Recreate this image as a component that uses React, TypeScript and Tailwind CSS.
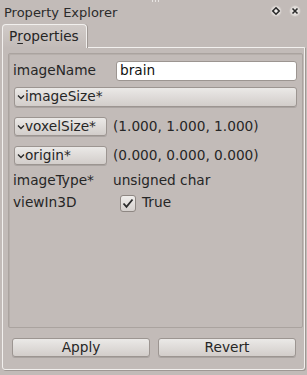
import React from 'react';

const font = { fontFamily: '"DejaVu Sans", Verdana, sans-serif' };

const Chevron = () => (
    <svg width="8" height="6" viewBox="0 0 8 6" className="shrink-0">
        <path d="M1 1.5 L4 4.5 L7 1.5" fill="none" stroke="#2a2a2a" strokeWidth="1.4" />
    </svg>
);

const ExpandButton: React.FC<{ label: string; className?: string }> = ({ label, className }) => (
    <button
        type="button"
        className={`flex items-center gap-[1px] pl-[2px] rounded-[3px] border border-[#9c9591] bg-gradient-to-b from-[#ebe9e7] to-[#d2cdca] shadow-[0_1px_0_rgba(0,0,0,0.12)] text-[13.7px] leading-none text-[#262626] ${className ?? ''}`}
    >
        <Chevron />
        <span className="-ml-[1px]">{label}</span>
    </button>
);

const TitleIcon: React.FC<{ kind: 'float' | 'close' }> = ({ kind }) => (
    <svg width="14" height="14" viewBox="0 0 14 14">
        <defs>
            <radialGradient id={`g-${kind}`} cx="50%" cy="50%" r="50%">
                <stop offset="0%" stopColor="#f4f2f0" />
                <stop offset="70%" stopColor="#dcd7d4" />
                <stop offset="100%" stopColor="#c2bbb8" stopOpacity="0" />
            </radialGradient>
        </defs>
        <circle cx="7" cy="7" r="6.5" fill={`url(#g-${kind})`} />
        {kind === 'float' ? (
            <path d="M7 3.8 L10.2 7 L7 10.2 L3.8 7 Z" fill="none" stroke="#2b2b2b" strokeWidth="1.6" />
        ) : (
            <path d="M4.5 4.5 L9.5 9.5 M9.5 4.5 L4.5 9.5" stroke="#2b2b2b" strokeWidth="1.6" />
        )}
    </svg>
);

export default function App() {
    return (
        <div className="w-[307px] h-[375px] bg-[#c2bbb8] text-[#262626] flex flex-col overflow-hidden relative" style={font}>
            <div className="absolute left-[152px] top-0 flex gap-[2px]">
                <span className="w-[1px] h-[2px] bg-[#e8e5e3]" />
                <span className="w-[1px] h-[2px] bg-[#e8e5e3]" />
                <span className="w-[1px] h-[2px] bg-[#e8e5e3]" />
            </div>
            {/* title bar */}
            <div className="h-[24px] flex items-center pl-[4px] pr-[5px] shrink-0">
                <span className="text-[13px] leading-none flex-1 text-[#2b2b2b]">Property Explorer</span>
                <div className="flex items-center gap-[5px] mt-[-2px]">
                    <TitleIcon kind="float" />
                    <TitleIcon kind="close" />
                </div>
            </div>

            {/* tab */}
            <div className="flex pl-[2px] shrink-0">
                <div className="h-[24px] w-[85px] rounded-t-[4px] border border-b-0 border-[#f2f0ee] bg-gradient-to-b from-[#d1cbc8] to-[#c2bbb8] shadow-[1px_0_0_#9f9894] flex items-center pl-[6px] text-[13.7px] leading-none -mb-[1px] relative z-10">
                    P<span className="underline underline-offset-2">r</span>operties
                </div>
            </div>

            {/* tab pane */}
            <div className="mx-[2px] h-[323px] border border-[#f2f0ee] rounded-b-[3px] shadow-[1px_1px_0_#9f9894] flex flex-col pt-[5px] pl-[5px] pr-[1px]">
                <div className="h-[275px] border border-[#aaa39f] rounded-[2px] shadow-[inset_1px_1px_0_#b6afab] flex flex-col pt-[7px] pl-[4px] pr-[5px]">
                    <div className="h-[20px] flex items-center">
                        <span className="w-[103px] text-[13.7px] leading-none">imageName</span>
                        <div className="flex-1 h-[20px] bg-white border border-[#9c9591] rounded-[3px] flex items-center pl-[3px] text-[13.7px] leading-none text-[#111]">
                            brain
                        </div>
                    </div>
                    <ExpandButton label="imageSize*" className="mt-[6px] h-[20px] w-[283px] ml-[1px]" />
                    <div className="mt-[10px] h-[19px] flex items-center">
                        <ExpandButton label="voxelSize*" className="h-[19px] w-[93px] ml-[1px]" />
                        <span className="ml-[6px] text-[13.7px] leading-none">(1.000, 1.000, 1.000)</span>
                    </div>
                    <div className="mt-[10px] h-[19px] flex items-center">
                        <ExpandButton label="origin*" className="h-[19px] w-[93px] ml-[1px]" />
                        <span className="ml-[6px] text-[13.7px] leading-none">(0.000, 0.000, 0.000)</span>
                    </div>
                    <div className="mt-[6px] h-[20px] flex items-center">
                        <span className="w-[100px] text-[13.7px] leading-none">imageType*</span>
                        <span className="text-[13.7px] leading-none">unsigned char</span>
                    </div>
                    <div className="mt-[2px] h-[20px] flex items-center">
                        <span className="w-[107px] text-[13.7px] leading-none">viewIn3D</span>
                        <span className="w-[16px] h-[17px] rounded-[3px] border border-[#8e8783] bg-gradient-to-b from-[#f0eeec] to-[#d5d0cd] flex items-center justify-center">
                            <svg width="12" height="11" viewBox="0 0 12 11">
                                <path d="M1.5 5.5 L4.5 8.8 L10.5 1.5" fill="none" stroke="#2b2b2b" strokeWidth="1.8" />
                            </svg>
                        </span>
                        <span className="ml-[6px] text-[13.7px] leading-none">True</span>
                    </div>
                </div>
                <div className="mt-[10px] flex gap-[8px] pl-[4px] pr-[5px]">
                    <button type="button" className="h-[19px] w-[138px] rounded-[3px] border border-[#9c9591] bg-gradient-to-b from-[#ebe9e7] to-[#d2cdca] shadow-[0_1px_0_rgba(0,0,0,0.12)] text-[13.7px] leading-none">
                        Apply
                    </button>
                    <button type="button" className="h-[19px] w-[138px] rounded-[3px] border border-[#9c9591] bg-gradient-to-b from-[#ebe9e7] to-[#d2cdca] shadow-[0_1px_0_rgba(0,0,0,0.12)] text-[13.7px] leading-none">
                        Revert
                    </button>
                </div>
            </div>
        </div>
    );
}
